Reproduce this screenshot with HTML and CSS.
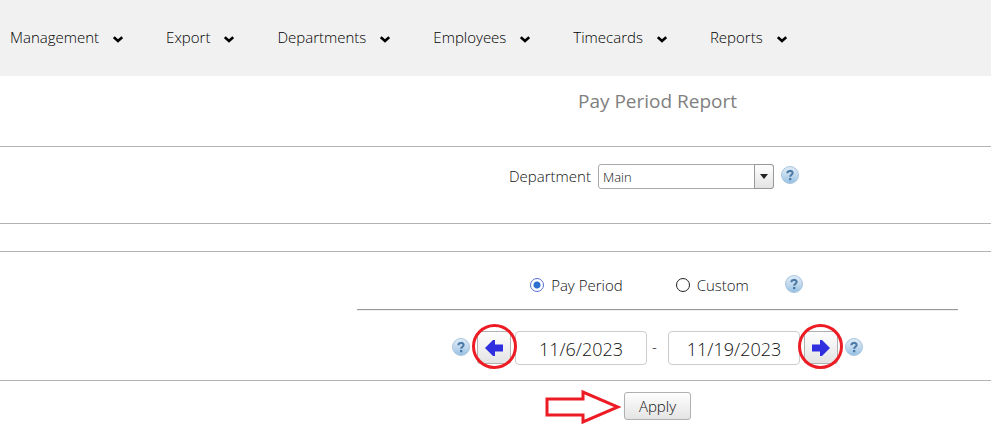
FILE: index.html
```html
<!DOCTYPE html>
<html lang="en">
<head>
  <meta charset="UTF-8">
  <title>Pay Period Report</title>
  <link rel="stylesheet" href="styles.css">
</head>
<body>

  <!-- shared icons -->
  <svg class="icon-defs" aria-hidden="true">
    <defs>
      <linearGradient id="helpFill" x1="0" y1="0" x2="0" y2="1">
        <stop offset="0" stop-color="#dfecf7"/>
        <stop offset="0.5" stop-color="#c3daee"/>
        <stop offset="1" stop-color="#93bfe2"/>
      </linearGradient>
      <symbol id="chevron" viewBox="0 0 10 7">
        <path d="M0.8 1.2L5 5L9.2 1.2" fill="none" stroke="#000" stroke-width="2.6"/>
      </symbol>
      <symbol id="help" viewBox="0 0 18 18">
        <circle cx="9" cy="9" r="8.5" fill="url(#helpFill)" stroke="#a9c5dd" stroke-width="1"/>
        <path d="M6.4 7.2C6.4 4.2 11.6 4.2 11.6 7C11.6 8.8 9.2 8.8 9.2 10.8" fill="none" stroke="#4c7aa6" stroke-width="2.1"/>
        <rect x="8" y="12" width="2.3" height="2.2" fill="#4c7aa6"/>
      </symbol>
      <symbol id="arrow" viewBox="0 0 18 16">
        <path d="M0 8L8 0H10V4.5H18V11.5H10V16H8Z" fill="#2f2fe0"/>
      </symbol>
    </defs>
  </svg>

  <nav class="navbar">
    <a href="#">Management <svg class="chevron"><use href="#chevron"/></svg></a>
    <a href="#">Export <svg class="chevron"><use href="#chevron"/></svg></a>
    <a href="#">Departments <svg class="chevron"><use href="#chevron"/></svg></a>
    <a href="#">Employees <svg class="chevron"><use href="#chevron"/></svg></a>
    <a href="#">Timecards <svg class="chevron"><use href="#chevron"/></svg></a>
    <a href="#">Reports <svg class="chevron"><use href="#chevron"/></svg></a>
  </nav>

  <main>
    <section class="title-bar">
      <h1>Pay Period Report</h1>
    </section>

    <section class="filter">
      <label for="department">Department</label>
      <div class="combo">
        <select id="department">
          <option>Main</option>
        </select>
        <span class="combo-arrow"></span>
      </div>
      <svg class="help"><use href="#help"/></svg>
    </section>

    <section class="period">
      <div class="period-type">
        <input type="radio" name="period" id="payPeriod" checked>
        <label for="payPeriod">Pay Period</label>
        <input type="radio" name="period" id="custom">
        <label for="custom">Custom</label>
        <svg class="help"><use href="#help"/></svg>
      </div>

      <hr>

      <div class="dates">
        <svg class="help"><use href="#help"/></svg>
        <div class="step">
          <button type="button" aria-label="Previous period"><svg><use href="#arrow"/></svg></button>
          <span class="ring"></span>
        </div>
        <input type="text" value="11/6/2023" aria-label="Start date">
        <span class="dash">-</span>
        <input type="text" value="11/19/2023" aria-label="End date">
        <div class="step next">
          <button type="button" aria-label="Next period"><svg><use href="#arrow"/></svg></button>
          <span class="ring"></span>
        </div>
        <svg class="help"><use href="#help"/></svg>
      </div>
    </section>

    <section class="actions">
      <div class="apply">
        <svg class="pointer" viewBox="0 0 76 36">
          <path d="M2 10H38V3L73 18L38 33V26H2Z" fill="none" stroke="#ed1c24" stroke-width="3"/>
        </svg>
        <button type="button">Apply</button>
      </div>
    </section>
  </main>

</body>
</html>
```
FILE: styles.css
```css
* {
  box-sizing: border-box;
}

body {
  margin: 0;
  background: #fff;
  color: #111;
  font-family: "Segoe UI", "Open Sans", "Noto Sans", sans-serif;
  font-size: 15px;
  font-weight: 300;
  line-height: 20px;
}

.icon-defs {
  position: absolute;
  width: 0;
  height: 0;
}

.navbar {
  display: flex;
  align-items: center;
  gap: 43px;
  height: 76px;
  padding: 0 0 2px 10px;
  background: #f1f1f1;
}

.navbar a {
  display: flex;
  align-items: center;
  gap: 14px;
  color: #000;
  text-decoration: none;
}

.chevron {
  width: 10px;
  height: 7px;
  margin-top: 4px;
}

section {
  padding-left: 324px;
  border-bottom: 1px solid #b3b3b3;
}

.title-bar {
  height: 71px;
  padding-top: 13px;
}

h1 {
  margin: 0;
  color: #808080;
  font-size: 19px;
  font-weight: 400;
  line-height: 24px;
  text-align: center;
}

.filter {
  display: flex;
  justify-content: center;
  align-items: flex-start;
  gap: 7px;
  height: 77px;
  padding-top: 17px;
  padding-right: 7px;
}

.filter label {
  padding-top: 2px;
}

.combo {
  position: relative;
}

.combo select {
  display: block;
  width: 176px;
  height: 25px;
  padding: 0 24px 0 4px;
  appearance: none;
  background: #fff;
  border: 1px solid #aaa;
  border-radius: 3px;
  color: #111;
  font: inherit;
  font-size: 13px;
}

.combo-arrow {
  position: absolute;
  top: 0;
  right: 0;
  width: 20px;
  height: 25px;
  border: 1px solid #999;
  border-radius: 0 3px 3px 0;
  background: linear-gradient(#fefefe, #e4e4e4);
  pointer-events: none;
}

.combo-arrow::after {
  content: "";
  position: absolute;
  top: 9px;
  left: 5px;
  border: 4px solid transparent;
  border-top: 5px solid #222;
  border-bottom: 0;
}

.help {
  flex: none;
  width: 18px;
  height: 18px;
}

.filter .help {
  margin-top: 2px;
}

.period {
  margin-top: 27px;
  border-top: 1px solid #b3b3b3;
}

.period-type {
  display: flex;
  justify-content: center;
  align-items: center;
  height: 57px;
  padding: 8px 0 0 18px;
}

.period-type input {
  appearance: none;
  width: 14px;
  height: 14px;
  margin: 0 7px 0 0;
  border: 1px solid #222;
  border-radius: 50%;
}

.period-type input:checked {
  border-color: #5a6fd0;
  background: radial-gradient(#2f6fd0 0 3px, #fff 4px);
}

.period-type label[for="payPeriod"] {
  margin-right: 53px;
}

.period-type label[for="custom"] {
  margin-right: 36px;
}

.period-type .help {
  margin-bottom: 2px;
}

hr {
  width: 90%;
  height: 2px;
  margin: 0 auto;
  border: 0;
  border-top: 1px solid #999;
  border-bottom: 1px solid #eee;
}

.dates {
  display: flex;
  justify-content: center;
  align-items: flex-start;
  gap: 4px;
  padding: 20px 0 15px;
}

.dates .help {
  margin: 7px 3px 0;
}

.dates input {
  width: 132px;
  height: 34px;
  padding: 1px 0 0;
  border: 1px solid #ccc;
  border-radius: 4px;
  color: #111;
  font: inherit;
  font-size: 18px;
  text-align: center;
}

.dash {
  width: 13px;
  padding: 5px 0 0 1px;
}

.step {
  position: relative;
}

button {
  border: 1px solid #b0b0b0;
  border-radius: 3px;
  background: linear-gradient(#fefefe, #e4e4e4);
  color: #111;
  font: inherit;
}

.step button {
  display: flex;
  justify-content: center;
  align-items: center;
  width: 34px;
  height: 33px;
  padding: 0;
}

.step svg {
  width: 18px;
  height: 16px;
}

.next svg {
  transform: scaleX(-1);
}

.ring {
  position: absolute;
  top: -7px;
  left: -5px;
  width: 45px;
  height: 45px;
  border: 3px solid #ed1c24;
  border-radius: 50%;
  pointer-events: none;
}

.next .ring {
  left: -6px;
}

.actions {
  display: flex;
  justify-content: center;
  padding-top: 11px;
  padding-bottom: 17px;
  border-bottom: 0;
}

.apply {
  position: relative;
}

.apply button {
  display: block;
  width: 67px;
  height: 28px;
  padding: 0;
}

.pointer {
  position: absolute;
  top: -3px;
  right: 70px;
  width: 76px;
  height: 36px;
}
```
